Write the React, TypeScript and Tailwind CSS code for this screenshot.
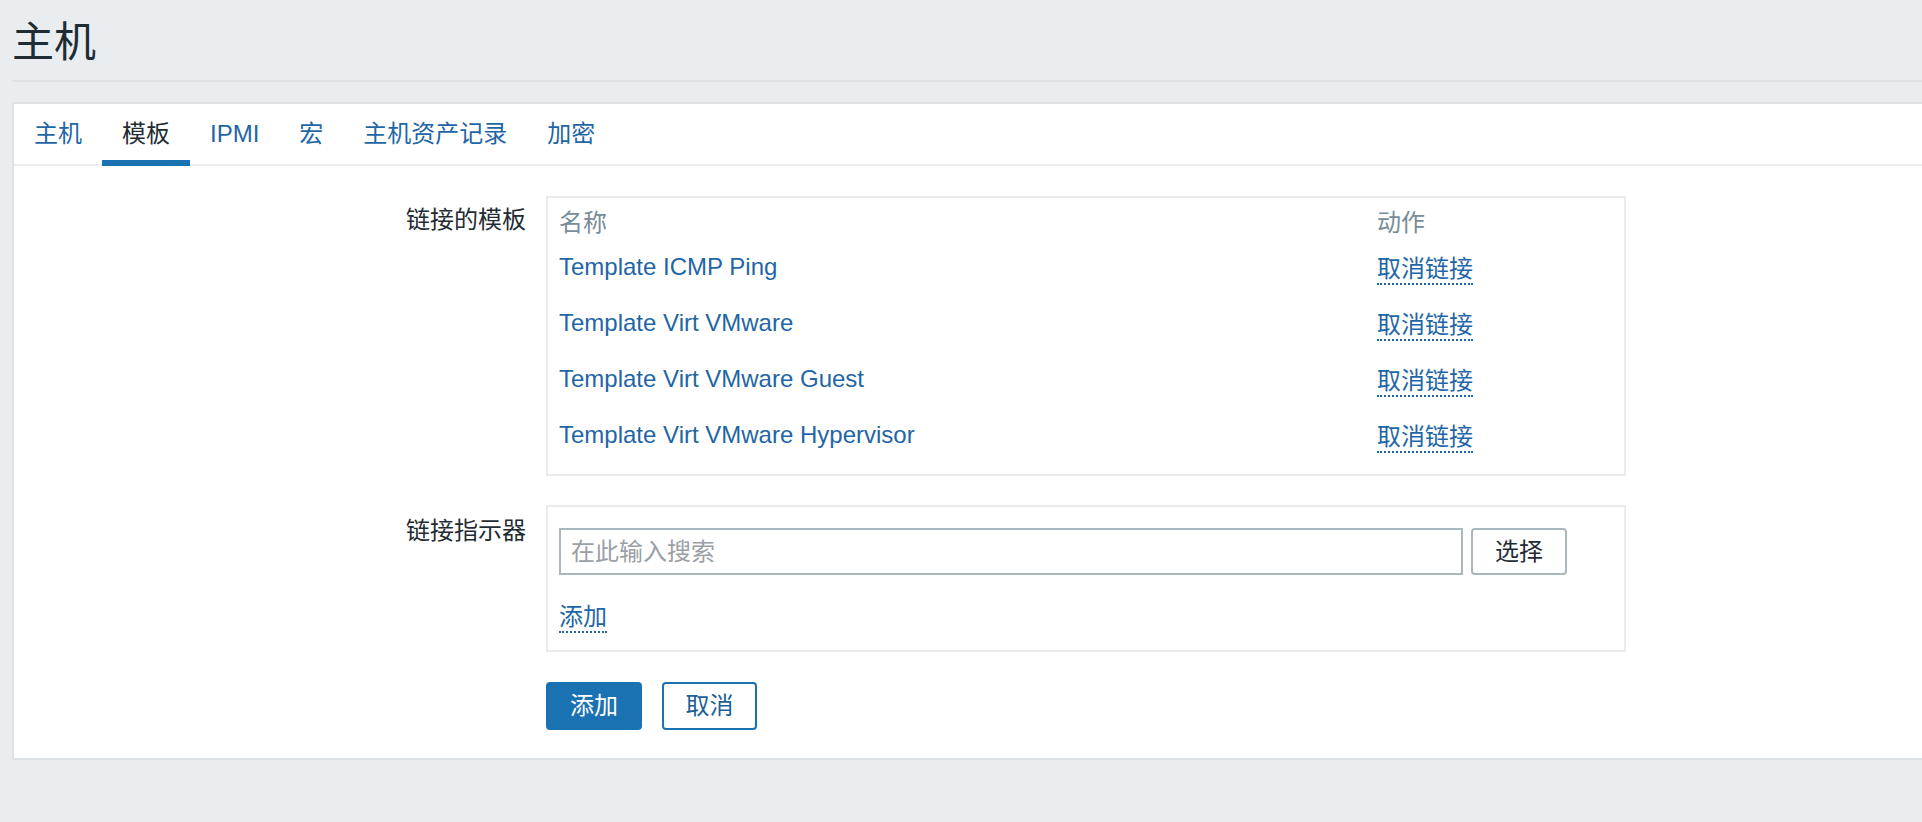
const FONT = "font-['Liberation_Sans','Noto_Sans_CJK_SC',sans-serif]"

const tabs = ['主机', '模板', 'IPMI', '宏', '主机资产记录', '加密']

const templates = [
  'Template ICMP Ping',
  'Template Virt VMware',
  'Template Virt VMware Guest',
  'Template Virt VMware Hypervisor',
]

function DottedLink({ children }: { children: React.ReactNode }) {
  return (
    <a
      href="#"
      className="inline-block border-b-2 border-dotted border-[#1f66a6] leading-[28px] text-[#1f66a6]"
    >
      {children}
    </a>
  )
}

export default function App() {
  return (
    <div className={`${FONT} min-h-[822px] bg-[#e9edf0] pl-3 text-[24px] text-[#1f2c33]`}>
      <div className="border-b-2 border-[#dde2e6] pt-[18px] pb-[12px]">
        <h1 className="text-[42px] leading-[50px] font-normal">主机</h1>
      </div>

      <div className="mt-5 border-y-2 border-l-2 border-[#dde2e6] bg-white">
        <nav className="flex h-[62px] border-b-2 border-[#ebeef0]">
          {tabs.map((t, i) => (
            <div
              key={t}
              className={`relative flex h-[60px] items-center px-5 leading-[28px] ${
                i === 1 ? 'text-[#1f2c33]' : 'text-[#1f66a6]'
              }`}
            >
              {t}
              {i === 1 && <span className="absolute right-0 -bottom-[2px] left-0 h-[6px] bg-[#1a72b3]" />}
            </div>
          ))}
        </nav>

        <div className="grid grid-cols-[512px_1080px] gap-x-5 pt-[30px] pb-[28px]">
          {/* linked templates */}
          <div className="pt-[10px] text-right leading-[28px]">链接的模板</div>
          <div className="border-2 border-[#ebebeb] px-[11px] pt-[9px] pb-[11px]">
            <div className="flex h-[32px] items-center text-[#768d99]">
              <div className="w-[818px]">名称</div>
              <div>动作</div>
            </div>
            {templates.map((t) => (
              <div key={t} className="flex h-[56px] items-center">
                <div className="w-[818px] leading-[28px] text-[#1f66a6]">{t}</div>
                <div className="pt-[4px]">
                  <DottedLink>取消链接</DottedLink>
                </div>
              </div>
            ))}
          </div>

          {/* linked indicator */}
          <div className="mt-[29px] pt-[12px] text-right leading-[28px]">链接指示器</div>
          <div className="mt-[29px] h-[147px] border-2 border-[#ebebeb] px-[11px] pt-[21px]">
            <div className="flex gap-2">
              <input
                placeholder="在此输入搜索"
                className="h-[47px] w-[904px] border-2 border-[#aab7bf] px-[10px] text-[24px] text-[#1f2c33] outline-none placeholder:text-[#9aa0a4]"
              />
              <button className="h-[47px] w-[96px] rounded-[4px] border-2 border-[#aab7bf] bg-white text-[24px] text-[#1f2c33]">
                选择
              </button>
            </div>
            <div className="mt-[24px]">
              <DottedLink>添加</DottedLink>
            </div>
          </div>

          <div />
          <div className="mt-[30px] flex gap-5">
            <button className="h-[48px] w-[96px] rounded-[4px] bg-[#1a72b3] text-[24px] text-white">添加</button>
            <button className="h-[48px] w-[95px] rounded-[4px] border-2 border-[#1a72b3] bg-white text-[24px] text-[#1c5f98]">
              取消
            </button>
          </div>
        </div>
      </div>
    </div>
  )
}
